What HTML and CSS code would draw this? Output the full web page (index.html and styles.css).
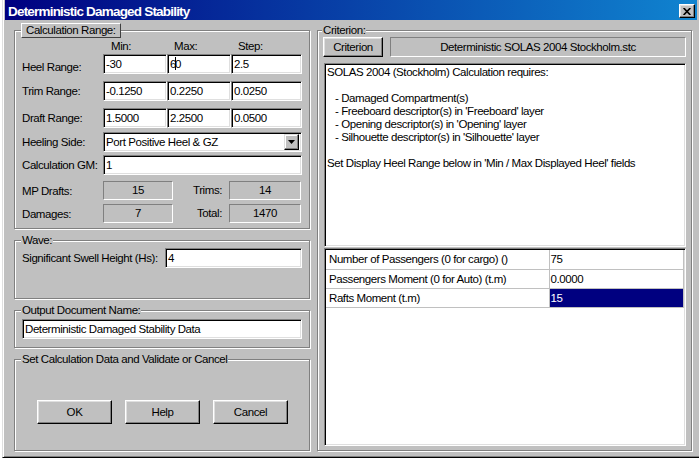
FILE: index.html
```html
<!DOCTYPE html>
<html lang="en">
<head>
<meta charset="utf-8">
<title>Deterministic Damaged Stability</title>
<link rel="stylesheet" href="styles.css">
</head>
<body>
<div class="screen">
  <div class="behind"></div>
  <div class="window">
    <div class="titlebar">
      <span class="title">Deterministic Damaged Stability</span>
      <span class="close"><svg width="8" height="7" viewBox="0 0 8 7"><path d="M0.6 0 L7.4 7 M7.4 0 L0.6 7" stroke="#000" stroke-width="1.7"/></svg></span>
    </div>
    <div class="client">
      <div class="left">
        <fieldset class="group g-range">
          <legend class="legend-btn">Calculation Range:</legend>
          <div class="row hdr"><span class="lbl"></span><span class="c1 hcol">Min:</span><span class="c2 hcol">Max:</span><span class="c3 hcol">Step:</span></div>
          <div class="row"><span class="lbl low">Heel Range:</span><div class="edit c1">-30</div><div class="edit c2">6<i class="caret"></i>0</div><div class="edit c3">2.5</div></div>
          <div class="row gap7"><span class="lbl">Trim Range:</span><div class="edit c1">-0.1250</div><div class="edit c2">0.2250</div><div class="edit c3">0.0250</div></div>
          <div class="row gap7"><span class="lbl">Draft Range:</span><div class="edit c1">1.5000</div><div class="edit c2">2.2500</div><div class="edit c3">0.0500</div></div>
          <div class="row gap4"><span class="lbl">Heeling Side:</span>
            <div class="edit combo"><span class="combo-text">Port Positive Heel &amp; GZ</span><span class="combo-btn"><svg width="7" height="4" viewBox="0 0 7 4"><path d="M0 0h7L3.5 4z" fill="#000"/></svg></span></div>
          </div>
          <div class="row gap3"><span class="lbl">Calculation GM:</span><div class="edit wide">1</div></div>
          <div class="stats">
            <span class="lbl">MP Drafts:</span><span class="val">15</span><span class="lbl2">Trims:</span><span class="val">14</span>
            <span class="lbl">Damages:</span><span class="val">7</span><span class="lbl2">Total:</span><span class="val">1470</span>
          </div>
        </fieldset>

        <fieldset class="group g-wave">
          <legend>Wave:</legend>
          <div class="wave-row"><span class="lbl">Significant Swell Height (Hs):</span><div class="edit hs">4</div></div>
        </fieldset>

        <fieldset class="group g-output">
          <legend>Output Document Name:</legend>
          <div class="edit docname">Deterministic Damaged Stability Data</div>
        </fieldset>

        <fieldset class="group g-set">
          <legend>Set Calculation Data and Validate or Cancel</legend>
          <div class="buttons">
            <button class="btn act">OK</button>
            <button class="btn act">Help</button>
            <button class="btn act">Cancel</button>
          </div>
        </fieldset>
      </div>

      <div class="right">
        <fieldset class="group g-crit">
          <legend>Criterion:</legend>
          <div class="crit-row">
            <button class="btn crit-btn">Criterion</button>
            <div class="file">Deterministic SOLAS 2004 Stockholm.stc</div>
          </div>
          <div class="memo">
            <div class="line">SOLAS 2004 (Stockholm) Calculation requires:</div>
            <div class="line"></div>
            <div class="line item">- Damaged Compartment(s)</div>
            <div class="line item">- Freeboard descriptor(s) in 'Freeboard' layer</div>
            <div class="line item">- Opening descriptor(s) in 'Opening' layer</div>
            <div class="line item">- Silhouette descriptor(s) in 'Silhouette' layer</div>
            <div class="line"></div>
            <div class="line">Set Display Heel Range below in 'Min / Max Displayed Heel' fields</div>
          </div>
          <div class="props">
            <table class="grid">
              <tr><td class="pname">Number of Passengers (0 for cargo) ()</td><td class="pval">75</td></tr>
              <tr><td class="pname">Passengers Moment (0 for Auto) (t.m)</td><td class="pval">0.0000</td></tr>
              <tr><td class="pname">Rafts Moment (t.m)</td><td class="pval sel">15</td></tr>
            </table>
          </div>
        </fieldset>
      </div>
    </div>
  </div>
</div>
</body>
</html>
```

FILE: styles.css
```css
* { box-sizing: border-box; }
html, body { margin: 0; padding: 0; }
body {
  width: 699px;
  height: 459px;
  overflow: hidden;
  background: #fff;
  font-family: "Liberation Sans", Arial, sans-serif;
  font-size: 11.5px;
  letter-spacing: -0.42px;
  color: #000;
}
.screen { display: flex; height: 459px; }
.behind { width: 2px; background: #fff; flex: none; }
.window {
  width: 697px;
  height: 458px;
  background: #c0c0c0;
  border-left: 1px solid #dfdfdf;
  border-bottom: 1px solid #000;
  box-shadow: inset 1px 0 #fff, inset 0 -1px #808080;
  padding: 0 2px 0 2px;
  display: flex;
  flex-direction: column;
}

/* title bar */
.titlebar {
  height: 20px;
  flex: none;
  display: flex;
  justify-content: space-between;
  align-items: flex-start;
  background: linear-gradient(to right, #000080, #1084d0);
  padding: 0 2px 0 3px;
}
.title {
  color: #fff;
  font-weight: bold;
  font-size: 13.5px;
  letter-spacing: -0.8px;
  line-height: 14px;
  padding-top: 5px;
}
.close {
  width: 16px;
  height: 14px;
  margin-top: 4px;
  background: #c0c0c0;
  border: 1px solid;
  border-color: #fff #000 #000 #fff;
  box-shadow: inset -1px -1px #808080, inset 1px 1px #dfdfdf;
  display: flex;
  align-items: center;
  justify-content: center;
}
.close svg { display: block; margin-left: -1px; }

/* client layout */
.client {
  display: flex;
  gap: 7px;
  padding: 3px 0 0 9px;
  align-items: flex-start;
}
.left { width: 296px; display: flex; flex-direction: column; gap: 5px; }
.right { width: 375px; margin-top: 1px; }

/* group boxes */
.group {
  margin: 0;
  padding: 0;
  min-width: 0;
  border: 1px solid #808080;
  box-shadow: inset 1px 1px #fff, 1px 1px #fff;
}
.group > legend {
  margin-left: 6px;
  padding: 0 1px;
  height: 13px;
  line-height: 13px;
  background: #c0c0c0;
}
.group > legend.legend-btn {
  height: 15px;
  line-height: 13px;
  padding: 0 4px;
  border: 1px solid;
  border-color: #fff #404040 #404040 #fff;
}
.g-range { height: 206px; }
.g-wave { height: 65px; }
.g-output { height: 44px; }
.g-set { height: 98px; }
.g-crit { height: 427px; }
.g-crit > legend { margin-left: 4px; }

/* range rows */
.row { display: flex; height: 20px; padding-left: 7px; }
.row.hdr { height: 16px; }
.gap7 { margin-top: 7px; }
.gap4 { margin-top: 4px; }
.gap3 { margin-top: 3px; }
.lbl { width: 81px; flex: none; display: flex; align-items: center; white-space: nowrap; }
.lbl.low { padding-top: 6px; }
.c1, .c2 { width: 64px; flex: none; }
.c3 { width: 71px; flex: none; }
.hcol { line-height: 16px; padding-left: 7px; }
.hdr .c1 { padding-left: 8px; }

.edit {
  height: 20px;
  background: #fff;
  border: 1px solid;
  border-color: #808080 #fff #fff #808080;
  box-shadow: inset 1px 1px #000, inset -1px -1px #dfdfdf;
  padding: 1px 0 0 2px;
  line-height: 16px;
  white-space: nowrap;
  overflow: hidden;
}
.caret {
  display: inline-block;
  width: 1px;
  height: 13px;
  background: #000;
  vertical-align: -2px;
  margin: 0 -1px 0 -1px;
}
.wide { width: 199px; }
.combo {
  width: 199px;
  display: flex;
  justify-content: space-between;
  padding: 2px 2px 2px 2px;
}
.combo-text { line-height: 16px; margin-top: -1px; }
.combo-btn {
  width: 15px;
  height: 16px;
  margin-top: -1px;
  background: #c0c0c0;
  border: 1px solid;
  border-color: #dfdfdf #000 #000 #dfdfdf;
  box-shadow: inset -1px -1px #808080, inset 1px 1px #fff;
  display: flex;
  align-items: center;
  justify-content: center;
}
.combo-btn svg { display: block; }

.stats {
  display: grid;
  grid-template-columns: 81px 70px 56px 72px;
  grid-auto-rows: 19px;
  row-gap: 4px;
  padding-left: 7px;
  margin-top: 6px;
}
.val {
  border: 1px solid;
  border-color: #808080 #fff #fff #808080;
  text-align: center;
  line-height: 17px;
}
.lbl2 { text-align: right; padding-right: 7px; line-height: 19px; }

/* wave / output */
.wave-row { display: flex; height: 20px; padding-left: 7px; margin-top: 1px; }
.wave-row .lbl { width: 143px; }
.hs { width: 137px; }
.docname { width: 280px; margin: 2px 0 0 7px; }

/* buttons */
.btn {
  font: inherit;
  letter-spacing: inherit;
  color: #000;
  background: #c0c0c0;
  padding: 0;
  border: 1px solid;
  border-color: #fff #000 #000 #fff;
  box-shadow: inset -1px -1px #808080, inset 1px 1px #dfdfdf;
  text-align: center;
}
.buttons { display: flex; gap: 13px; margin: 34px 0 0 22px; }
.act { width: 75px; height: 24px; }

/* criterion */
.crit-row { display: flex; gap: 7px; padding-left: 5px; height: 20px; }
.crit-btn { width: 60px; height: 20px; }
.file {
  width: 296px;
  height: 20px;
  border: 1px solid;
  border-color: #808080 #fff #fff #808080;
  text-align: center;
  line-height: 18px;
}
.memo, .props {
  width: 362px;
  margin-left: 6px;
  background: #fff;
  border: 1px solid;
  border-color: #808080 #fff #fff #808080;
  box-shadow: inset 1px 1px #000, inset -1px -1px #dfdfdf;
}
.memo { height: 184px; margin-top: 6px; padding: 2px 0 0 2px; }
.line { height: 13px; line-height: 13px; white-space: nowrap; }
.line.item { padding-left: 8px; }
.props { height: 198px; margin-top: 1px; padding: 1px 0 0 1px; }
.grid { border-collapse: collapse; width: 358px; table-layout: fixed; }
.grid td {
  height: 19px;
  padding: 0;
  border-bottom: 1px solid #c0c0c0;
  border-right: 1px solid #c0c0c0;
  white-space: nowrap;
  overflow: hidden;
  line-height: 18px;
  vertical-align: top;
}
.pname { width: 223px; padding-left: 3px !important; }
.pval { padding-left: 1px !important; }
.sel { background: #000080; color: #fff; }
```
